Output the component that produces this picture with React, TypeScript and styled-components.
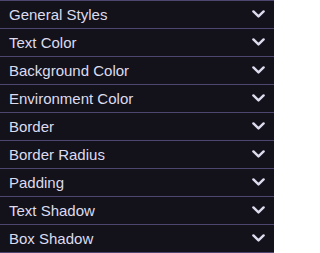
import React from 'react';
import styled, { createGlobalStyle } from 'styled-components';

const GlobalStyle = createGlobalStyle`
  body {
    margin: 0;
    background: #ffffff;
    font-family: "Liberation Sans", Arial, sans-serif;
  }
`;

const List = styled.div`
  width: 274px;
  background-color: #13121b;
  border-bottom: 1px solid #4d4670;
`;

const Row = styled.div`
  display: flex;
  align-items: center;
  justify-content: space-between;
  height: 27px;
  padding: 0 9px 0 9px;
  border-top: 1px solid #4d4670;
  box-sizing: content-box;
  cursor: pointer;
`;

const Label = styled.span`
  color: #dcdcee;
  font-size: 15px;
  line-height: 27px;
`;

const Chevron = styled.svg`
  width: 13px;
  height: 8px;
  margin-top: -2px;
  flex-shrink: 0;
`;

const sections = [
  'General Styles',
  'Text Color',
  'Background Color',
  'Environment Color',
  'Border',
  'Border Radius',
  'Padding',
  'Text Shadow',
  'Box Shadow',
];

export default function App() {
  return (
    <>
      <GlobalStyle />
      <List>
        {sections.map((name) => (
          <Row key={name}>
            <Label>{name}</Label>
            <Chevron viewBox="0 0 13 8">
              <polyline
                points="1.4,1.4 6.5,6.4 11.6,1.4"
                fill="none"
                stroke="#dcdcee"
                strokeWidth="2.4"
                strokeLinecap="round"
                strokeLinejoin="round"
              />
            </Chevron>
          </Row>
        ))}
      </List>
    </>
  );
}
